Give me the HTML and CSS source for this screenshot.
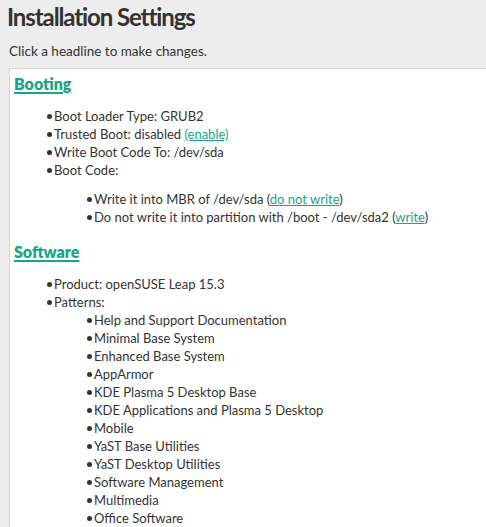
FILE: index.html
```html
<!DOCTYPE html>
<html>
<head>
<meta charset="utf-8">
<link rel="stylesheet" href="styles.css">
</head>
<body>
<h1 class="title">Installation Settings</h1>
<p class="hint">Click a headline to make changes.</p>
<div class="box">
  <h2 class="section"><a href="#">Booting</a></h2>
  <ul class="items">
    <li>Boot Loader Type: GRUB2</li>
    <li>Trusted Boot: disabled <a href="#">(enable)</a></li>
    <li>Write Boot Code To: /dev/sda</li>
    <li>Boot Code:
      <ul class="sub sub-gap">
        <li>Write it into MBR of /dev/sda (<a href="#">do not write</a>)</li>
        <li>Do not write it into partition with /boot - /dev/sda2 (<a href="#">write</a>)</li>
      </ul>
    </li>
  </ul>
  <h2 class="section"><a href="#">Software</a></h2>
  <ul class="items">
    <li>Product: openSUSE Leap 15.3</li>
    <li>Patterns:
      <ul class="sub">
        <li>Help and Support Documentation</li>
        <li>Minimal Base System</li>
        <li>Enhanced Base System</li>
        <li>AppArmor</li>
        <li>KDE Plasma 5 Desktop Base</li>
        <li>KDE Applications and Plasma 5 Desktop</li>
        <li>Mobile</li>
        <li>YaST Base Utilities</li>
        <li>YaST Desktop Utilities</li>
        <li>Software Management</li>
        <li>Multimedia</li>
        <li>Office Software</li>
      </ul>
    </li>
  </ul>
</div>
</body>
</html>
```
FILE: styles.css
```css
html, body {
  margin: 0;
  padding: 0;
  background: #ededed;
  color: #333;
  font-family: Lato, "Open Sans", sans-serif;
}
body {
  overflow: hidden;
  height: 527px;
}
.title {
  margin: 0;
  padding: 1px 0 0 7px;
  font-size: 24px;
  font-weight: 700;
  letter-spacing: -1.1px;
  line-height: 32px;
  color: #333;
}
.hint {
  margin: 9px 0 8px 9px;
  font-size: 13.5px;
  line-height: 18px;
}
.box {
  margin-left: 9px;
  background: #fff;
  border-top: 1px solid #d6d6d6;
  border-left: 1px solid #d6d6d6;
  padding: 4px 0 20px 4px;
  min-height: 600px;
}
a {
  color: #17a487;
}
.section {
  margin: 0;
  font-size: 16px;
  line-height: 22px;
  font-weight: 800;
}
.section a {
  text-decoration-thickness: 2px;
  text-underline-offset: 2px;
}
.items {
  margin: 12px 0 15px 0;
  padding-left: 40px;
  font-size: 13px;
  line-height: 18px;
}
.sub {
  margin: 0;
  padding-left: 40px;
}
.sub-gap {
  margin-top: 11px;
}
.items li, .sub li {
  list-style: none;
  position: relative;
}
.items li::before {
  content: "";
  position: absolute;
  left: -7px;
  top: 7px;
  width: 5px;
  height: 5px;
  border-radius: 50%;
  background: #333;
}
```
